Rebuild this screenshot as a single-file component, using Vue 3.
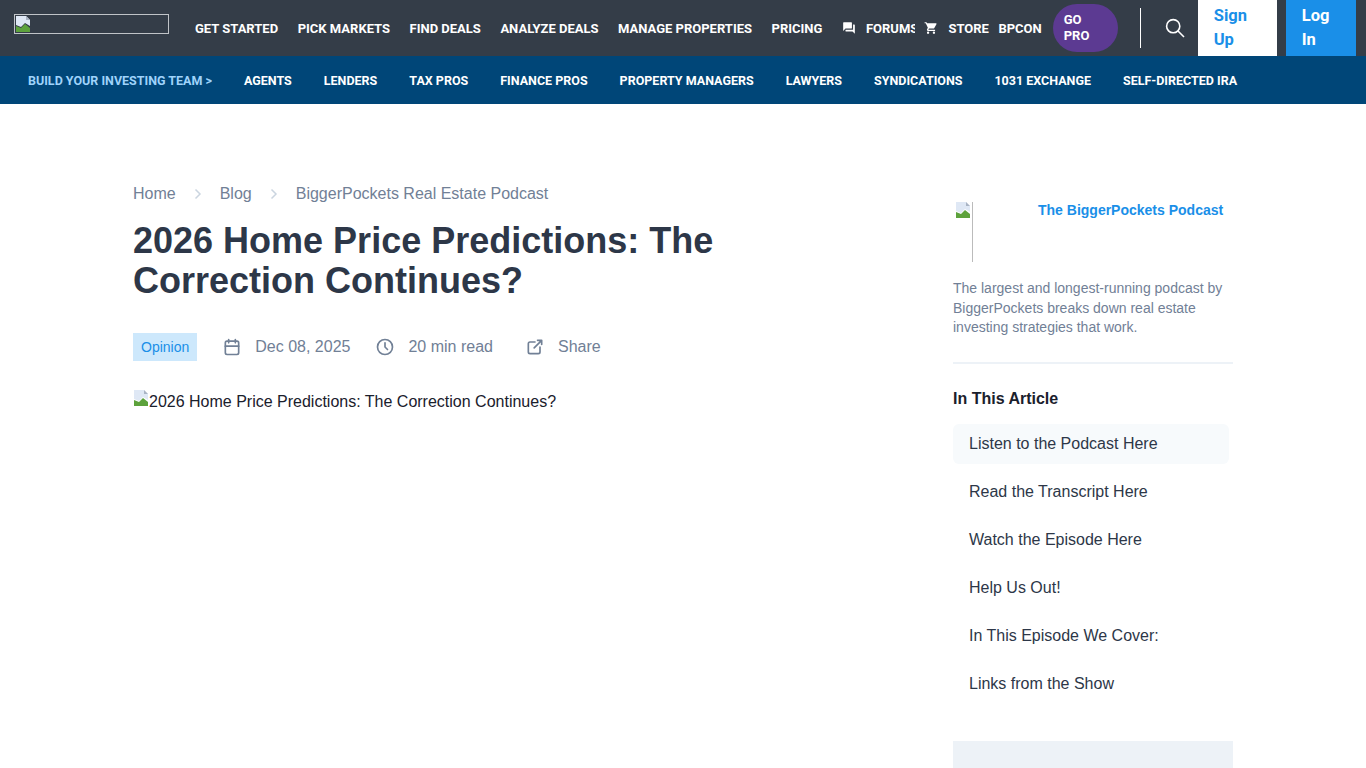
<script setup>
const mainLinks = ['GET STARTED', 'PICK MARKETS', 'FIND DEALS', 'ANALYZE DEALS', 'MANAGE PROPERTIES', 'PRICING']
const teamLinks = ['AGENTS', 'LENDERS', 'TAX PROS', 'FINANCE PROS', 'PROPERTY MANAGERS', 'LAWYERS', 'SYNDICATIONS', '1031 EXCHANGE', 'SELF-DIRECTED IRA']
const toc = ['Listen to the Podcast Here', 'Read the Transcript Here', 'Watch the Episode Here', 'Help Us Out!', 'In This Episode We Cover:', 'Links from the Show']
</script>

<template>
  <div class="page">
    <header class="topbar">
      <a class="logo">
        <svg class="broken" width="16" height="16" viewBox="0 0 16 16">
          <path d="M1 0h10l4 4v6L10 7 6 11 1 9z" fill="#dfe8f5" />
          <path d="M1 10l5 2 4-4 5 4v4H1z" fill="#5da23c" />
          <path d="M11 0v4h4z" fill="#a9b4c4" />
        </svg>
      </a>
      <nav class="main-nav">
        <a v-for="l in mainLinks" :key="l">{{ l }}</a>
        <a class="with-icon forums">
          <svg width="14" height="14" viewBox="0 0 24 24" fill="#fff"><path d="M21 6h-2v9H6v2c0 .6.4 1 1 1h11l4 4V7c0-.6-.4-1-1-1zm-4 6V3c0-.6-.4-1-1-1H3c-.6 0-1 .4-1 1v14l4-4h10c.6 0 1-.4 1-1z" /></svg>
          <span class="clip">FORUMS</span>
        </a>
        <a class="with-icon store">
          <svg width="14" height="14" viewBox="0 0 24 24" fill="#fff"><path d="M7 18a2 2 0 1 0 0 4 2 2 0 0 0 0-4zM1 2v2h2l3.6 7.6L5.2 14c-.7 1.3.3 3 1.8 3h12v-2H7.4l1.1-2h7.5c.7 0 1.4-.4 1.7-1l3.6-6.5c.4-.7-.1-1.5-.9-1.5H5.2l-.9-2H1zm16 16a2 2 0 1 0 0 4 2 2 0 0 0 0-4z" /></svg>
          <span>STORE</span>
        </a>
        <a class="bpcon">BPCON</a>
      </nav>
      <a class="go-pro">GO PRO</a>
      <span class="divider"></span>
      <svg class="search" width="20" height="20" viewBox="0 0 20 20" fill="none" stroke="#fff" stroke-width="1.6"><circle cx="8.2" cy="8.2" r="6.6" /><path d="M13 13l6 6" /></svg>
      <a class="signup">Sign Up</a>
      <a class="login">Log In</a>
    </header>

    <nav class="team-nav">
      <a class="team-title">BUILD YOUR INVESTING TEAM &gt;</a>
      <a v-for="l in teamLinks" :key="l">{{ l }}</a>
    </nav>

    <div class="content">
      <main class="article">
        <div class="crumbs">
          <span>Home</span>
          <svg width="8" height="12" viewBox="0 0 8 12" fill="none" stroke="#cbd5e0" stroke-width="1.5"><path d="M1.5 1.5L6 6l-4.500 4.500" /></svg>
          <span>Blog</span>
          <svg width="8" height="12" viewBox="0 0 8 12" fill="none" stroke="#cbd5e0" stroke-width="1.5"><path d="M1.5 1.5L6 6l-4.500 4.500" /></svg>
          <span>BiggerPockets Real Estate Podcast</span>
        </div>
        <h1>2026 Home Price Predictions: The Correction Continues?</h1>
        <div class="meta">
          <span class="badge">Opinion</span>
          <span class="meta-item date">
            <svg width="20" height="20" viewBox="0 0 24 24" fill="none" stroke="#718096" stroke-width="2" stroke-linecap="round" stroke-linejoin="round"><rect x="4" y="5" width="16" height="16" rx="2" /><path d="M16 3v4M8 3v4M4 11h16" /></svg>
            Dec 08, 2025
          </span>
          <span class="meta-item read">
            <svg width="20" height="20" viewBox="0 0 24 24" fill="none" stroke="#718096" stroke-width="2" stroke-linecap="round" stroke-linejoin="round"><circle cx="12" cy="12" r="9" /><path d="M12 7v5l3 3" /></svg>
            20 min read
          </span>
          <span class="meta-item share">
            <svg width="20" height="20" viewBox="0 0 24 24" fill="none" stroke="#718096" stroke-width="2" stroke-linecap="round" stroke-linejoin="round"><path d="M12 6H6a2 2 0 0 0-2 2v10a2 2 0 0 0 2 2h10a2 2 0 0 0 2-2v-6M11 13l9-9M15 4h5v5" /></svg>
            Share
          </span>
        </div>
        <div class="hero-alt">
          <svg width="16" height="16" viewBox="0 0 16 16">
            <path d="M1 0h10l4 4v6L10 7 6 11 1 9z" fill="#dfe8f5" />
            <path d="M1 10l5 2 4-4 5 4v4H1z" fill="#5da23c" />
            <path d="M11 0v4h4z" fill="#a9b4c4" />
          </svg>
          <span>2026 Home Price Predictions: The Correction Continues?</span>
        </div>
      </main>

      <aside class="sidebar">
        <div class="podcast">
          <div class="cover">
            <svg width="16" height="16" viewBox="0 0 16 16">
              <path d="M1 0h10l4 4v6L10 7 6 11 1 9z" fill="#dfe8f5" />
              <path d="M1 10l5 2 4-4 5 4v4H1z" fill="#5da23c" />
              <path d="M11 0v4h4z" fill="#a9b4c4" />
            </svg>
          </div>
          <a class="podcast-name">The BiggerPockets Podcast</a>
        </div>
        <p class="blurb">The largest and longest-running podcast by BiggerPockets breaks down real estate investing strategies that work.</p>
        <h2>In This Article</h2>
        <ul class="toc">
          <li v-for="(t, i) in toc" :key="t" :class="{ active: i === 0 }">{{ t }}</li>
        </ul>
        <div class="promo"></div>
      </aside>
    </div>
  </div>
</template>

<style>
html, body { margin: 0; overflow: hidden; background: #fff; }
</style>

<style scoped>
.page { height: 768px; overflow: hidden; font-family: "Liberation Sans", Arial, sans-serif; }
a { text-decoration: none; display: block; }

.topbar { height: 56px; background: #343d48; display: flex; align-items: center; font-family: Roboto, sans-serif; font-weight: 700; color: #fff; }
.logo { width: 153px; height: 18px; margin: -9px 0 0 14px; border: 1px solid #c0c4c8; overflow: hidden; flex: none; }
.broken { display: block; margin-top: 1px; }
.main-nav { display: flex; align-items: center; gap: 19.500px; margin-left: 26px; font-size: 13px; flex: none; }
.with-icon { display: flex; align-items: center; gap: 10px; }
.forums { margin-left: 0; }
.clip { width: 49px; overflow: hidden; white-space: clip; }
.store { margin-left: -10px; }
.bpcon { margin-left: -10px; }
.go-pro { width: 43px; height: 48px; padding: 8px 11px; margin-left: 11px; box-sizing: border-box; width: 65px; padding: 8px 22px 8px 11px; border-radius: 24px; background: #5c3a92; font-size: 13px; line-height: 16px; flex: none; }
.divider { width: 1px; height: 40px; margin-left: 22px; background: #fff; flex: none; }
.search { margin-left: 24px; flex: none; }
.signup, .login { box-sizing: border-box; height: 56px; padding: 0 16px; font-size: 16.500px; line-height: 24px; flex: none; display: flex; align-items: center; }
.signup { width: 79px; margin-left: 13px; background: #fff; color: #1a8fe8; }
.login { width: 70px; margin-left: 9px; background: #1a8fe8; color: #fff; }

.team-nav { height: 48px; background: #004678; display: flex; align-items: center; gap: 32px; padding-left: 28px; font-family: Roboto, sans-serif; font-weight: 700; font-size: 12.500px; color: #fff; }
.team-title { color: #9fd3fb; }

.content { display: flex; padding: 80px 0 0 133px; }
.article { width: 820px; flex: none; }
.crumbs { display: flex; align-items: center; gap: 18px; height: 20px; font-size: 16px; color: #718096; }
h1 { margin: 17px 0 0; width: 620px; font-size: 36px; line-height: 40px; font-weight: 700; color: #2d3748; }
.meta { display: flex; align-items: center; height: 28px; margin-top: 32px; font-size: 16px; color: #718096; }
.badge { padding: 0 8px; line-height: 28px; font-size: 14px; background: #cde8fc; color: #1a8fe8; }
.meta-item { display: flex; align-items: center; gap: 13px; }
.date { margin-left: 25px; }
.read { margin-left: 25px; }
.share { margin-left: 32px; }
.hero-alt { display: flex; margin-top: 29px; font-size: 16px; line-height: 24px; color: #1a202c; }

.sidebar { width: 280px; flex: none; padding-top: 18px; }
.podcast { display: flex; height: 60px; }
.cover { box-sizing: border-box; width: 20px; height: 60px; border-right: 1px solid #bbb; padding-left: 2px; overflow: hidden; flex: none; }
.podcast-name { margin-left: 65px; font-size: 14px; font-weight: 700; line-height: 16px; color: #1a8fe8; white-space: nowrap; }
.blurb { margin: 17px 0 0; padding-bottom: 24px; border-bottom: 2px solid #edf2f7; font-size: 14px; line-height: 19.600px; color: #718096; }
h2 { margin: 25px 0 0; font-size: 16px; line-height: 20px; font-weight: 700; color: #1a202c; }
.toc { list-style: none; margin: 15px 0 0; padding: 0; width: 276px; }
.toc li { height: 40px; padding-left: 16px; margin-bottom: 8px; border-radius: 6px; font-size: 16px; line-height: 40px; color: #2d3748; }
.toc .active { background: #f7fafc; }
.promo { height: 40px; margin-top: 37px; background: #edf2f7; }
</style>
